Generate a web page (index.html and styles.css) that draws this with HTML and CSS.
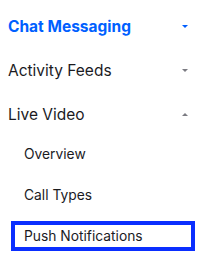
FILE: index.html
```html
<!DOCTYPE html>
<html lang="en">
<head>
    <meta charset="UTF-8">
    <meta name="viewport" content="width=device-width, initial-scale=1.0">
    <title>Docs navigation</title>
    <link rel="stylesheet" href="styles.css">
</head>
<body>

    <nav class="sidenav">
        <div class="nav-item active">
            <span>Chat Messaging</span>
            <span class="caret caret-down"></span>
        </div>
        <div class="nav-item">
            <span>Activity Feeds</span>
            <span class="caret caret-down"></span>
        </div>
        <div class="nav-item">
            <span>Live Video</span>
            <span class="caret caret-up"></span>
        </div>
        <div class="sub-list">
            <div class="sub-item"><span>Overview</span></div>
            <div class="sub-item"><span>Call Types</span></div>
            <div class="sub-item focused"><span>Push Notifications</span></div>
        </div>
    </nav>

</body>
</html>
```

FILE: styles.css
```css
body {
    font-family: Inter, "Noto Sans", sans-serif;
    background-color: #ffffff;
    color: #1b1b1f;
    margin: 0;
    padding: 0;
}

.sidenav {
    padding-top: 4px;
}

.nav-item {
    height: 44px;
    display: flex;
    align-items: center;
    justify-content: space-between;
    padding: 0 18px 0 8px;
    font-size: 15.5px;
}

.nav-item.active {
    color: #005fff;
    font-weight: 700;
}

.caret {
    width: 0;
    height: 0;
    border-left: 3px solid transparent;
    border-right: 3px solid transparent;
}

.caret-down {
    border-top: 3px solid #7b7b82;
}

.caret-up {
    border-bottom: 3px solid #7b7b82;
}

.nav-item.active .caret-down {
    border-top-color: #005fff;
}

.sub-list {
    margin-top: -3px;
}

.sub-item {
    height: 41px;
    display: flex;
    align-items: center;
    padding-left: 24px;
    font-size: 13.8px;
}

.sub-item.focused {
    padding-left: 11px;
}

.sub-item.focused span {
    box-sizing: border-box;
    width: 184px;
    height: 30px;
    border: 4px solid #0a2eff;
    padding-left: 9px;
    display: flex;
    align-items: center;
}
```
